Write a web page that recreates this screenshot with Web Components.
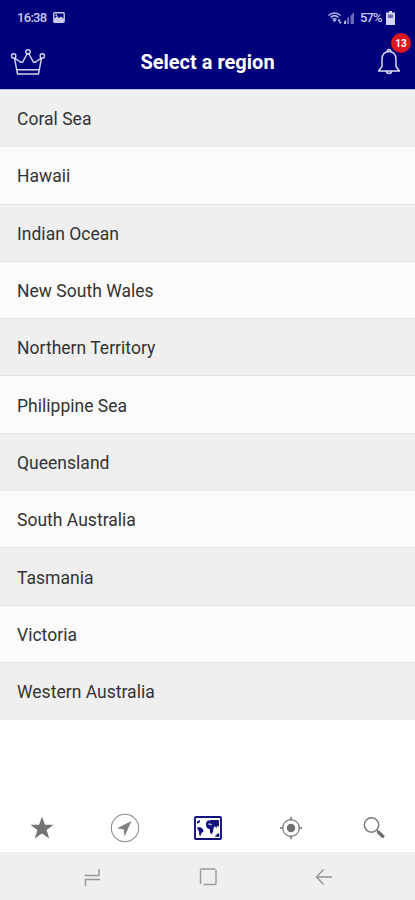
<!DOCTYPE html>
<html lang="en">
<head>
<meta charset="utf-8">
<title>Select a region</title>
<style>
html,body{margin:0;height:100%;background:#fff;font-family:Roboto,"Liberation Sans",sans-serif}
</style>
</head>
<body>
<region-app></region-app>
<script>
function define(name, markup){
  const t=document.createElement('template');
  t.innerHTML='<style>*{box-sizing:border-box}:host{box-sizing:border-box}svg{display:block;flex:none}</style>'+markup;
  customElements.define(name,class extends HTMLElement{
    constructor(){super();this.attachShadow({mode:'open'}).append(t.content.cloneNode(true));}
  });
}

define('status-bar',`
<style>
:host{display:flex;justify-content:space-between;align-items:center;height:35px;padding:0 20px 0 17px;color:#c9c9ee;font-size:13px;font-weight:500}
div{display:flex;align-items:center}
.time{width:30px;white-space:nowrap;letter-spacing:-.7px}
.pct{letter-spacing:-.9px;margin:0 4px 0 5px;width:22px;white-space:nowrap}
</style>
<div><span class="time">16:38</span>
<svg width="12" height="11" viewBox="0 0 12 11" style="margin-left:6px"><rect x=".8" y=".8" width="10.4" height="9.4" rx="1" fill="none" stroke="#c9c9ee" stroke-width="1.4"/><path d="M1 9V7l3-3 2 2 2-1.500 3 2.500v3H1z" fill="#c9c9ee"/><circle cx="3.300" cy="3.200" r=".9" fill="#c9c9ee"/></svg></div>
<div>
<svg width="27" height="14" viewBox="0 0 27 14"><g fill="none" stroke="#b9b9e4" stroke-width="1.500"><path d="M.5 4.500C4 1 9 1 12.500 4.500M2.500 6.500c2.500-2.300 5.500-2.300 8 0M4.500 8.500c1.300-1 2.700-1 4 0"/></g><path d="M4.800 9h3.400l-1.700 2.500zM11 7.500l1.800 2.700H9.500zM12 13l-1.500-2.300H14zM16 10.500l2-1.500v4h-2z" fill="#b9b9e4"/><path d="M19 7.500l2-2V13h-2zM22.500 5l3.500-4v12h-3.500z" fill="#6a6abb"/></svg>
<span class="pct">57%</span>
<svg width="9" height="14" viewBox="0 0 9 14"><path d="M3 0h3v1.500h3V14H0V1.500h3z" fill="#d5d5f0"/><path d="M2 3.500h5V7H2z" fill="#6868b8"/></svg>
</div>`);

define('alert-bell',`
<style>
:host{display:block;position:relative;width:24px;height:28px}
.badge{position:absolute;left:14px;top:-15px;width:20px;height:20px;border-radius:50%;background:#dc1720;color:#fff;font-size:10px;font-weight:700;line-height:21px;text-align:center}
</style>
<svg width="24" height="28" viewBox="0 0 24 28"><g fill="none" stroke="#dedef6" stroke-width="1.450" stroke-linejoin="round"><path d="M10.300 3.800a1.800 1.800 0 1 1 3.400 0M5 18.500V11C5 6.500 8 3.500 12 3.500s7 3 7 7.500v7.500l3.500 4.500h-21z"/><path d="M9.500 23c0 3.400 5 3.400 5 0"/></g></svg>
<span class="badge"><slot></slot></span>`);

define('title-bar',`
<style>
:host{display:grid;grid-template-columns:60px 1fr 60px;height:54px;align-items:center;color:#fff}
h1{margin:0;font-size:20px;line-height:24px;font-weight:700;text-align:center;letter-spacing:0;white-space:nowrap}
.crown{margin-left:10px}
alert-bell{justify-self:end;margin-right:14px}
</style>
<svg class="crown" width="37" height="28" viewBox="0 0 37 28"><g fill="none" stroke="#d3d3f0" stroke-width="1.400" stroke-linejoin="round"><circle cx="3.700" cy="8" r="2.200"/><circle cx="18" cy="3.800" r="2.200"/><circle cx="32.300" cy="8" r="2.200"/><path d="M4.500 10l3 16h21l3-16-6.500 4.300h-1.500L19 6h-2l-4.500 8.300H11zM7 21.800h22"/></g></svg>
<h1><slot></slot></h1>
<alert-bell>13</alert-bell>`);

define('region-row',`
<style>
:host{display:flex;align-items:center;height:57.3px;padding:2px 17px 0;font-size:17.500px;color:#333;letter-spacing:.02px;white-space:nowrap;border-bottom:1px solid #e5e5e5;background:#efefef}
:host(:nth-child(even)){background:#fbfbfb}
:host(:last-child){border-bottom-color:#efefef}
</style><slot></slot>`);

define('tab-bar',`
<style>
:host{display:grid;grid-template-columns:repeat(5,1fr);height:50px;place-items:center;padding-top:1px}
</style>
<svg width="26" height="26" viewBox="0 0 26 26"><path d="M13 1.500l2.900 8.300h8.700l-7 5.200 2.600 8.600-7.200-5.200-7.200 5.200 2.600-8.600-7-5.200h8.700z" fill="#747474"/></svg>
<svg width="30" height="30" viewBox="0 0 30 30"><circle cx="15" cy="15" r="13.700" fill="none" stroke="#8f8f8f" stroke-width="1.100"/><path d="M21.500 8L7 15.200l6.700 1.400.8 6.800z" fill="#808080"/></svg>
<svg width="28" height="24" viewBox="0 0 28 24"><rect x="1" y="1" width="26" height="22" rx=".8" fill="#fff" stroke="#12127c" stroke-width="1.900"/><path d="M3 5.500l3-1.500v2L4 7.500H3zM3.500 11l3 .3 3 2.500-.3 2-1.700 1.200-1 2.800-1.200-.5-.3-4-1.500-2zM12 7l1.500-2.300 4-.7 7.500 0 0 6.500-2-.5-.5 2.200-1.800-2.200-1.200 2.500-.5 3.500-1.800 2.500-1.200-2.500-.3-3-2-.5-1.500-2zM20.500 20.500l1.800-1.500 1.700-2 1.300 1v3z" fill="#12127c"/><path d="M14 8.500l1.500-2 1 1.500 1.500-.2-.5 1.600z" fill="#b9b9da"/></svg>
<svg width="22" height="22" viewBox="0 0 22 22"><circle cx="11" cy="11" r="8.300" fill="none" stroke="#777" stroke-width="1.200"/><circle cx="11" cy="11" r="4.200" fill="#707070"/><path d="M11 0v3.500M11 18.500v3.500M0 11h3.500M18.500 11h3.500" stroke="#777" stroke-width="1.500"/></svg>
<svg width="22" height="22" viewBox="0 0 22 22"><circle cx="8.500" cy="8" r="7.200" fill="none" stroke="#777" stroke-width="1.400"/><path d="M13.500 13l2.500 2.600" stroke="#777" stroke-width="1.500"/><path d="M15.800 15.500l3.900 3.700" stroke="#707070" stroke-width="3.600" stroke-linecap="round"/></svg>`);

define('system-nav',`
<style>
:host{display:grid;grid-template-columns:20px 20px 18px;justify-content:space-between;align-items:center;height:48px;padding:1px 82px 0 83px;background:#efefef}
</style>
<svg width="20" height="20" viewBox="0 0 20 20"><path d="M1.500 8.500h14.500V2M2.500 19v-6.500h14.500" fill="none" stroke="#969696" stroke-width="1.400"/></svg>
<svg width="20" height="20" viewBox="0 0 20 20"><path d="M1.500 17V3.200Q1.500 2 2.500 2h14M4.500 17.500h11q1.500 0 1.500-1.500V3" fill="none" stroke="#999" stroke-width="1.400"/></svg>
<svg width="18" height="18" viewBox="0 0 18 18"><path d="M17 9H1.500M8.500 1.500L1.500 9l7 7.500" fill="none" stroke="#929292" stroke-width="1.300"/></svg>`);

define('region-app',`
<style>
:host{display:flex;flex-direction:column;height:100vh;min-height:900px}
header{background:#00007b;height:90px;border-bottom:1px solid #c2c2df;flex:none}
main{flex:1}
</style>
<header><status-bar></status-bar><title-bar>Select a region</title-bar></header>
<main><region-row>Coral Sea</region-row><region-row>Hawaii</region-row><region-row>Indian Ocean</region-row><region-row>New South Wales</region-row><region-row>Northern Territory</region-row><region-row>Philippine Sea</region-row><region-row>Queensland</region-row><region-row>South Australia</region-row><region-row>Tasmania</region-row><region-row>Victoria</region-row><region-row>Western Australia</region-row></main>
<tab-bar></tab-bar><system-nav></system-nav>`);
</script>
</body>
</html>
